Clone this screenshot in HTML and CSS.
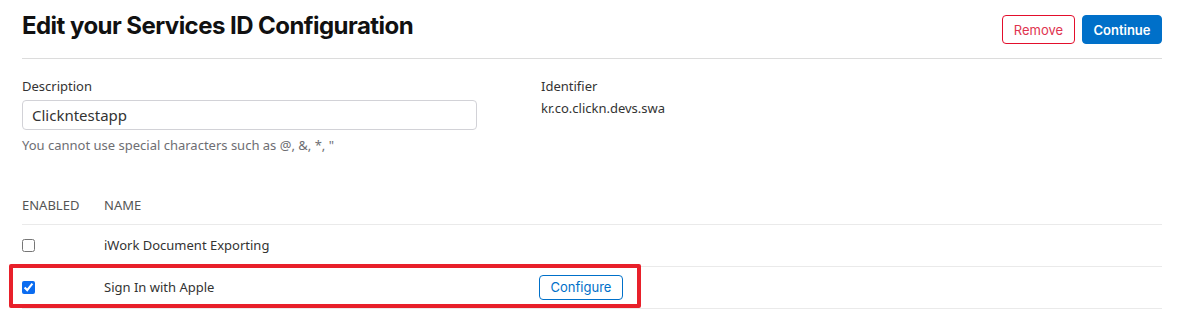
FILE: index.html
```html
<!DOCTYPE html>
<html lang="en">
<head>
  <meta charset="UTF-8" />
  <title>Edit your Services ID Configuration</title>
  <link rel="stylesheet" href="styles.css">
</head>
<body>
  <main class="page">
    <header class="page-head">
      <h1>Edit your Services ID Configuration</h1>
      <div class="actions">
        <button class="btn btn-remove">Remove</button>
        <button class="btn btn-continue">Continue</button>
      </div>
    </header>

    <section class="fields">
      <div class="field">
        <label for="desc">Description</label>
        <input id="desc" type="text" value="Clickntestapp">
        <p class="hint">You cannot use special characters such as @, &amp;, *, "</p>
      </div>
      <div class="field">
        <label>Identifier</label>
        <p class="value">kr.co.clickn.devs.swa</p>
      </div>
    </section>

    <table class="caps">
      <thead>
        <tr><th class="col-en">ENABLED</th><th class="col-name">NAME</th><th></th></tr>
      </thead>
      <tbody>
        <tr>
          <td><input type="checkbox" class="check"></td>
          <td>iWork Document Exporting</td>
          <td></td>
        </tr>
        <tr class="marked">
          <td><input type="checkbox" class="check" checked></td>
          <td>Sign In with Apple</td>
          <td class="col-act"><button class="btn btn-configure">Configure</button></td>
        </tr>
      </tbody>
    </table>
  </main>
</body>
</html>
```

FILE: styles.css
```css
*, *::before, *::after {
  margin: 0; padding: 0; box-sizing: border-box;
}
body {
  font-family: 'Noto Sans', 'Open Sans', sans-serif;
  font-size: 13px;
  color: #333;
  background: #fff;
}
.page {
  width: 1140px;
  margin-left: 22px;
}
/* header */
.page-head {
  height: 59px;
  display: flex;
  justify-content: space-between;
  border-bottom: 1px solid #dcdcdc;
  padding-top: 15px;
}
.page-head h1 {
  font-family: Inter, 'Liberation Sans', sans-serif;
  font-size: 24px;
  font-weight: 700;
  color: #111;
  line-height: 1;
  margin-top: -1px;
  letter-spacing: -0.55px;
}
.actions {
  display: flex;
  gap: 7px;
  height: 29px;
}
.btn {
  font-family: Inter, 'Liberation Sans', sans-serif;
  font-size: 13px;
  border-radius: 4px;
  cursor: pointer;
  background: #fff;
}
.btn-remove {
  width: 73px;
  border: 1px solid #e30e2c;
  color: #e0344f;
}
.btn-continue {
  width: 80px;
  border: 1px solid #0070c9;
  background: #0070c9;
  color: #fff;
  font-weight: 600;
}
/* fields */
.fields {
  display: grid;
  grid-template-columns: 519px 1fr;
  padding-top: 18px;
}
.field label {
  display: block;
  color: #333;
  line-height: 18px;
}
.field input {
  margin-top: 5px;
  width: 455px;
  height: 30px;
  border: 1px solid #d2d2d7;
  border-radius: 4px;
  padding: 0 9px;
  font: inherit;
  font-size: 15px;
  color: #333;
}
.hint {
  color: #6e6e73;
  margin-top: 6px;
  line-height: 18px;
}
.value {
  margin-top: 4px;
  line-height: 18px;
}
/* capabilities table */
.caps {
  width: 100%;
  border-collapse: collapse;
  margin-top: 37px;
}
.caps th {
  text-align: left;
  font-weight: 400;
  color: #555;
  height: 33px;
  vertical-align: top;
  padding-top: 5px;
  border-bottom: 1px solid #eaeaea;
}
.caps td {
  height: 42px;
  border-bottom: 1px solid #eaeaea;
  vertical-align: middle;
  color: #333;
}
.col-en { width: 82px; }
.col-name { width: 435px; }
.check {
  width: 13px;
  height: 13px;
  margin: 0;
  display: block;
  accent-color: #0b6cf0;
}
.btn-configure {
  width: 84px;
  height: 25px;
  border: 1px solid #0070c9;
  color: #0070c9;
  font-size: 13px;
}
/* annotation box */
.marked td:first-child { position: relative; }
.marked td:first-child::before {
  content: "";
  position: absolute;
  left: -13px;
  top: -3px;
  width: 632px;
  height: 44px;
  border: 4px solid #e8202a;
  border-radius: 2px;
  pointer-events: none;
}
```
